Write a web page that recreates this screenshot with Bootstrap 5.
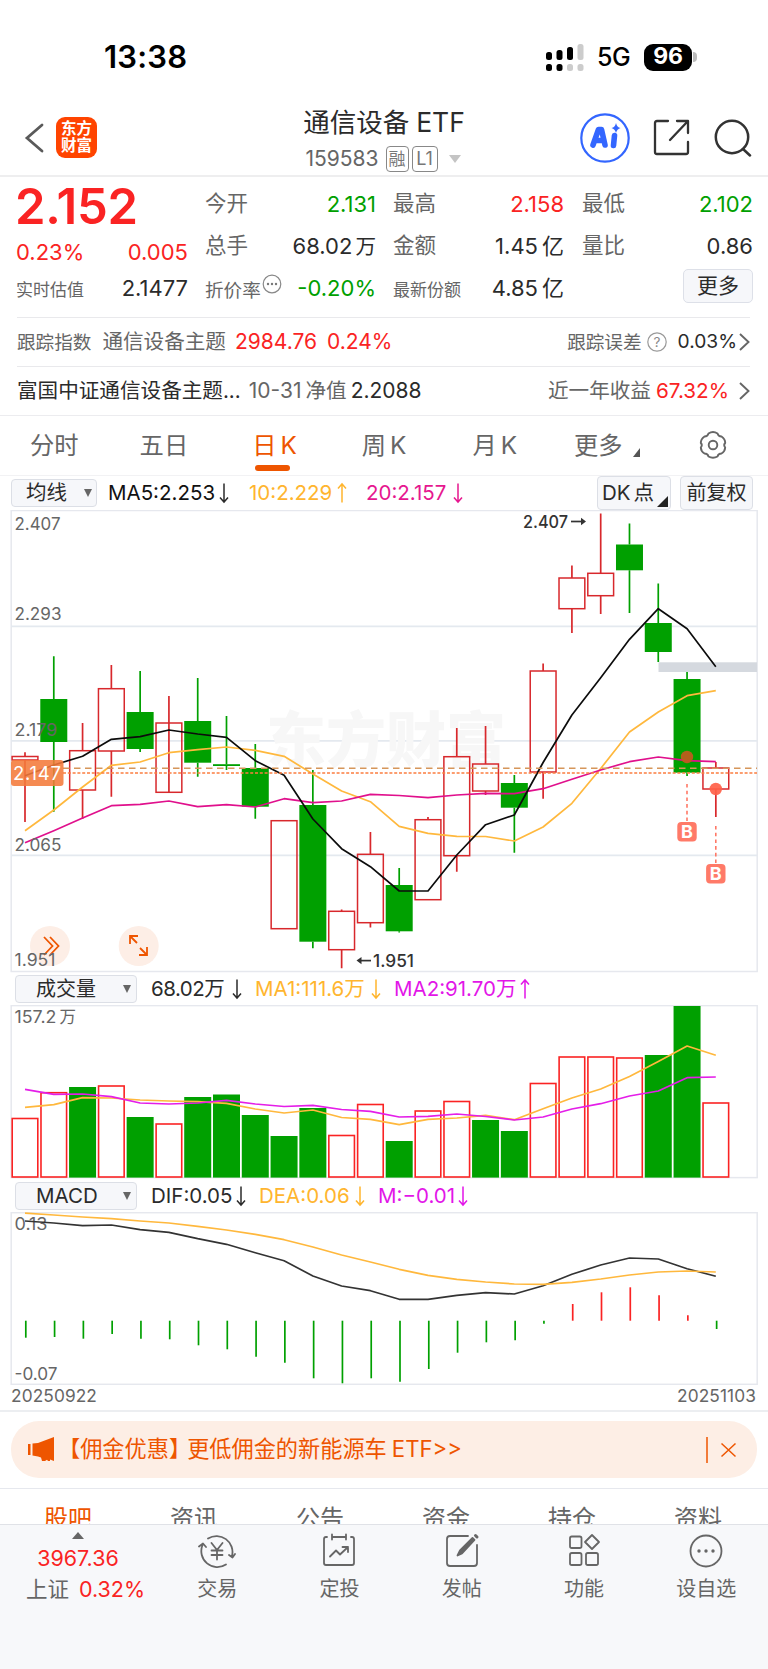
<!DOCTYPE html>
<html lang="zh-CN">
<head>
<meta charset="utf-8">
<meta name="viewport" content="width=device-width, initial-scale=1">
<title>通信设备ETF 159583</title>
<link href="https://cdn.jsdelivr.net/npm/bootstrap@5.3.0/dist/css/bootstrap.min.css" rel="stylesheet">
<style>
:root{--ink:#2b2b2b;--dim:#666;--up:#fa2323;--down:#00a000;--brand:#ee5500;--line:#ececef;--btn:#f6f7fa}
body{font-family:Inter,"Noto Sans CJK SC",sans-serif;color:var(--ink);background:#fff;font-size:21px;line-height:1.2;width:768px;height:1669px;overflow:hidden}
svg{display:block;flex:none}
.up{color:var(--up)}.down{color:var(--down)}.dim{color:var(--dim)}.brand{color:var(--brand)}
.t17{font-size:17px}.t18{font-size:18.6px}.t20{font-size:20.6px}
.gap-l{margin-left:4px}
.statusbar{height:94px;padding:20px 71px 0 104px}
.clock{font-size:31px;font-weight:600;letter-spacing:.2px;color:#000}
.net{font-size:25px;font-weight:500;color:#000;margin-left:13px;letter-spacing:-.6px}
.batt{width:48px;height:27px;border-radius:9px;background:#000;color:#fff;font-weight:700;font-size:23px;margin-left:14px;letter-spacing:-.3px}
.nub{width:4px;height:10px;border-radius:0 5px 5px 0;background:#bbb;margin-left:1px}
.topbar{height:83px;border-bottom:2px solid #eeeeef;padding-top:6px}
.side{width:280px}
.logo{width:41px;height:41px;border-radius:9px;background:#ff4400;color:#fff;font-weight:700;font-size:15.5px;line-height:17px;margin-left:12px;padding-top:3px;text-align:center}
.name{font-size:26.5px;line-height:36px}
.code{font-size:21px;line-height:26px;margin-top:6px;color:var(--dim);margin-left:-2px}
.tag{border:1.5px solid #888;border-radius:4px;height:26px;font-size:17px;color:#777;line-height:24px;text-align:center;flex:none}
.quote{height:140px;padding-left:16px}
.lastpx{font-size:49px;font-weight:600;height:60px;line-height:60px;letter-spacing:-.2px;color:var(--up);margin-left:-1px}
.qr{height:42px;font-size:21.5px}
.qr .num,.sub{font-size:22px}
.c0{width:172px;margin-right:17px}.c1{width:171px;margin-right:17px}.c2{width:171px;margin-right:18px}.c3{width:171px}
.more{width:70px;height:34px;border:1.5px solid #dde0e8;border-radius:5px;background:var(--btn);font-size:21px}
.info{height:49px;margin:0 18px 0 17px;border-top:1px solid #e9e9ec}
.tabs{height:61px;border-top:1px solid var(--line);border-bottom:1px solid #f2f2f4;font-size:24.3px;color:var(--dim)}
.tabs .cur{position:relative}
.tabs .cur::after{content:"";position:absolute;left:3px;width:35px;bottom:-11px;height:6px;border-radius:3px;background:var(--brand)}
.bar{font-size:20.5px;white-space:nowrap}
.bar>*{flex:none}
.pick{border:1.5px solid #dcdfe6;border-radius:4px;background:var(--btn);height:28px}
.tri{width:0;height:0;border:4px solid transparent;border-top:8px solid #666;border-bottom:0}
.y{color:#ffb52e}.m{color:#e6178f}.p{color:#e216e8}
.dates{height:25px;padding:0 12px 3px 11px;font-size:17.3px;color:#666;letter-spacing:.1px}
.promo{height:57px;margin:9px 11px 10px;border-radius:28px;background:#fdeee5;color:var(--brand);font-size:22.2px}
.subtabs{height:36px;border-top:1.5px solid #e6e8ee;font-size:24px;line-height:30px;color:var(--dim);overflow:hidden;padding-top:15px}
.subtabs span{width:126px;text-align:center;flex:none}
.dock{height:145px;background:#f7f8fa;border-top:1.5px solid #e0e2e7;color:var(--dim);font-size:20px}
.dock .it{width:122.3px}
.dock .idx{width:156px;font-size:21.5px}
.it svg{margin-top:8px;height:36px}
.it div{line-height:30px;margin-top:5px}
</style>
</head>
<body>
<div class="statusbar d-flex align-items-center">
  <span class="clock me-auto">13:38</span>
  <svg width="38" height="27"><g fill="#000"><rect y="8" width="6" height="8" rx="2.5"/><rect x="10.5" y="6" width="6" height="10" rx="2.5"/><rect x="21" y="3" width="6" height="13" rx="2.5"/><rect y="20" width="6" height="7" rx="2.5"/><rect x="10.5" y="20" width="6" height="7" rx="2.5"/></g><g fill="#ccc"><rect x="31.5" width="6" height="16" rx="2.5"/><rect x="21" y="20" width="6" height="7" rx="2.5"/><rect x="31.5" y="20" width="6" height="7" rx="2.5"/></g></svg>
  <span class="net">5G</span>
  <span class="batt d-flex align-items-center justify-content-center">96</span><span class="nub"></span>
</div>

<header class="topbar d-flex align-items-center">
  <div class="side d-flex align-items-center ps-4">
    <svg width="20" height="32" fill="none" stroke="#5a5a5a" stroke-width="2.8" stroke-linecap="round"><path d="M18 3 3 16l15 13"/></svg>
    <div class="logo">东方<br>财富</div>
  </div>
  <div class="text-center" style="width:208px">
    <div class="name">通信设备<span style="margin-left:7px">ETF</span></div>
    <div class="code d-flex align-items-center justify-content-center"><span>159583</span><span class="tag" style="width:23px;margin-left:7px">融</span><span class="tag" style="width:26px;margin-left:3px;font-size:18px">L1</span><svg style="margin-left:11px" width="12" height="8"><path d="M0 0h12L6 8z" fill="#c4c4c4"/></svg></div>
  </div>
  <div class="side d-flex align-items-center justify-content-end" style="padding-right:16px">
    <svg width="50" height="50"><circle cx="25" cy="25" r="23.7" fill="none" stroke="#3366ff" stroke-width="2.2"/><g stroke="#3366ff" stroke-width="5.6" fill="none" stroke-linecap="round" stroke-linejoin="round"><path d="M13 32 18.5 16.500h3L25 32M16 27.500h8M34.500 22.500 33.500 32.500"/></g><path d="M36 10q1 4.500 4.500 5-3.500 1-4.500 5-1-4-4.500-5 3.500-.5 4.500-5z" fill="#3366ff"/></svg>
    <svg style="margin-left:23px" width="37" height="37" fill="none" stroke="#333" stroke-width="2.300" stroke-linecap="round" stroke-linejoin="round"><path d="M15 2H4Q2 2 2 4v29q0 2 2 2h29q2 0 2-2V23M24 2h11v12M35 2 17 21"/></svg>
    <svg style="margin-left:24px" width="38" height="38" fill="none" stroke="#333" stroke-width="2.500" stroke-linecap="round"><circle cx="18" cy="18" r="16.200"/><path d="m29 30 7 6.500"/></svg>
  </div>
</header>

<section class="quote d-flex">
  <div class="c0">
    <div class="lastpx">2.152</div>
    <div class="sub up d-flex justify-content-between align-items-center" style="height:30px"><span>0.23%</span><span>0.005</span></div>
    <div class="qr d-flex justify-content-between align-items-center"><span class="t17 dim pt-1">实时估值</span><span class="num">2.1477</span></div>
  </div>
  <div class="c1" style="padding-top:6px">
    <div class="qr d-flex justify-content-between align-items-center"><span class="dim">今开</span><span class="num down">2.131</span></div>
    <div class="qr d-flex justify-content-between align-items-center"><span class="dim">总手</span><span class="num">68.02<span class="t20" style="margin-left:3px">万</span></span></div>
    <div class="qr d-flex align-items-center"><span class="t18 dim pt-1">折价率</span><svg style="margin:-9px 0 0 1px" width="20" height="20"><circle cx="10" cy="10" r="8.800" fill="none" stroke="#888" stroke-width="1.200"/><g fill="#777"><circle cx="6" cy="10" r="1.200"/><circle cx="10" cy="10" r="1.200"/><circle cx="14" cy="10" r="1.200"/></g></svg><span class="num down ms-auto">-0.20%</span></div>
  </div>
  <div class="c2" style="padding-top:6px">
    <div class="qr d-flex justify-content-between align-items-center"><span class="dim">最高</span><span class="num up">2.158</span></div>
    <div class="qr d-flex justify-content-between align-items-center"><span class="dim">金额</span><span class="num">1.45<span class="gap-l">亿</span></span></div>
    <div class="qr d-flex justify-content-between align-items-center"><span class="t17 dim pt-1">最新份额</span><span class="num">4.85<span class="gap-l">亿</span></span></div>
  </div>
  <div class="c3" style="padding-top:6px">
    <div class="qr d-flex justify-content-between align-items-center"><span class="dim">最低</span><span class="num down">2.102</span></div>
    <div class="qr d-flex justify-content-between align-items-center"><span class="dim">量比</span><span class="num">0.86</span></div>
    <div class="qr d-flex justify-content-end align-items-center" style="margin-top:-2px"><span class="more d-flex align-items-center justify-content-center">更多</span></div>
  </div>
</section>

<div class="info d-flex align-items-center">
  <span class="t18 dim">跟踪指数</span><span class="t20 dim" style="margin-left:11px">通信设备主题</span>
  <span class="up" style="margin-left:9px">2984.76</span><span class="up" style="margin-left:10px">0.24%</span>
  <span class="t18 dim ms-auto">跟踪误差</span>
  <svg style="margin:0 11px 0 5px" width="20" height="20"><circle cx="10" cy="10" r="9.200" fill="none" stroke="#999" stroke-width="1.200"/><text x="10" y="15" font-size="13.500" text-anchor="middle" fill="#888">?</text></svg>
  <span style="font-size:19.200px">0.03%</span>
  <svg style="margin-left:2px" width="11" height="18" fill="none" stroke="#666" stroke-width="1.900"><path d="m1 1 8.500 8L1 17"/></svg>
</div>
<div class="info d-flex align-items-center">
  <span class="t20">富国中证通信设备主题...</span><span class="dim" style="margin-left:8px">10-31<span class="gap-l t20">净值</span></span>
  <span style="margin-left:4px">2.2088</span>
  <span class="t20 dim ms-auto">近一年收益</span><span class="up" style="margin-left:5px;font-size:20.700px">67.32%</span>
  <svg style="margin-left:10px" width="11" height="18" fill="none" stroke="#666" stroke-width="1.900"><path d="m1 1 8.500 8L1 17"/></svg>
</div>

<nav class="tabs d-flex align-items-center">
  <span style="margin-left:30px">分时</span><span style="margin-left:61px">五日</span>
  <span class="cur brand" style="margin-left:64px">日<span class="gap-l">K</span></span>
  <span style="margin-left:65px">周<span class="gap-l">K</span></span>
  <span style="margin-left:66px">月<span class="gap-l">K</span></span>
  <span style="margin-left:57px">更多</span>
  <svg style="margin:14px 0 0 10px" width="7" height="9"><path d="M7 0v9H0z" fill="#555"/></svg>
  <svg style="margin:-2px 0 0 58px" width="30" height="30" fill="none" stroke="#666" stroke-width="1.900" stroke-linejoin="round"><path d="M10.500 3.500Q15 .5 19.500 3.500q.8 3 4 3 3.800 2.500 3.700 6.500-2 2 0 4.500-.3 4-3.700 6-3.200 0-4 3-4.500 2.600-9 0-.8-3-4-3-3.500-2-3.700-6 2-2.500 0-4.500 0-4 3.700-6.500 3.200 0 4-3z"/><circle cx="15" cy="15" r="4.300"/></svg>
</nav>

<div class="bar d-flex align-items-center" style="height:34px;padding-left:11px">
  <span class="pick d-flex align-items-center" style="width:86px;padding-left:14px">均线<i class="tri" style="margin-left:17px"></i></span>
  <span style="margin-left:11px;width:108px;color:#111">MA5:2.253</span><svg class="ar" width="16" height="22"></svg>
  <span class="y" style="margin-left:17px;width:85px">10:2.229</span><svg class="ar y" data-up="1" width="16" height="22"></svg>
  <span class="m" style="margin-left:16px;width:84px">20:2.157</span><svg class="ar m" width="16" height="22"></svg>
  <span class="pick d-flex align-items-center" style="width:74px;height:34px;margin-left:131px;padding-left:4px">DK<span style="margin-left:3px">点</span><svg style="margin:16px 0 0 3px" width="11" height="11"><path d="M11 0v11H0z" fill="#222"/></svg></span>
  <span class="pick d-flex align-items-center justify-content-center" style="width:73px;height:34px;margin-left:9px;font-size:20px">前复权</span>
</div>

<svg id="kline" width="768" height="463" viewBox="0 510 768 463"></svg>

<div class="bar d-flex align-items-center" style="height:32px;padding-left:15px">
  <span class="pick d-flex align-items-center" style="width:122px;padding-left:20px;font-size:20px">成交量<i class="tri" style="margin-left:27px"></i></span>
  <span style="margin-left:14px;width:78px;letter-spacing:-.5px">68.02万</span><svg class="ar" width="16" height="22"></svg>
  <span class="y" style="margin-left:10px;width:113px">MA1:111.6万</span><svg class="ar y" width="16" height="22"></svg>
  <span class="p" style="margin-left:10px;width:123px">MA2:91.70万</span><svg class="ar p" data-up="1" width="16" height="22"></svg>
</div>

<svg id="vol" width="768" height="175" viewBox="0 1005 768 175"></svg>

<div class="bar d-flex align-items-center" style="height:32px;padding-left:15px">
  <span class="pick d-flex align-items-center" style="width:122px;padding-left:20px">MACD<i class="tri" style="margin-left:25px"></i></span>
  <span style="margin-left:14px;width:82px">DIF:0.05</span><svg class="ar" width="16" height="22"></svg>
  <span class="y" style="margin-left:10px;width:93px">DEA:0.06</span><svg class="ar y" width="16" height="22"></svg>
  <span class="p" style="margin-left:10px;width:77px">M:−0.01</span><svg class="ar p" width="16" height="22"></svg>
</div>

<svg id="macd" width="768" height="173" viewBox="0 1212 768 173"></svg>
<div class="dates d-flex justify-content-between align-items-center"><span>20250922</span><span>20251103</span></div>

<div class="d-flow-root" style="border-top:2px solid #eceef1">
<div class="promo d-flex align-items-center">
  <svg style="margin-left:17px" width="27" height="25" fill="#ee5500"><path d="M0 7h2.500v11H0zM4.500 6.500 10 6 26 0v24l-4-1.600v1.600h-2l-1-1.200-2 1.200h-3l-1-3.500-3-1-5.500-1z"/></svg>
  <span style="margin-left:3px">【佣金优惠】</span><span style="margin-left:-4px">更低佣金的新能源车</span><span style="margin-left:5px">ETF&gt;&gt;</span>
  <svg class="ms-auto" style="margin-right:20px" width="31" height="26" fill="none" stroke="#ee5500" stroke-width="1.500"><path d="M1 0v26M15.500 6.500l14 13M29.500 6.500l-14 13"/></svg>
</div>
</div>
<div class="subtabs d-flex" style="padding-left:5px"><span class="brand">股吧</span><span>资讯</span><span>公告</span><span>资金</span><span>持仓</span><span>资料</span></div>

<footer class="dock d-flex text-center">
  <div class="idx">
    <svg class="mx-auto" style="margin-top:7px" width="12" height="7"><path d="M0 7h12L6 0z" fill="#666"/></svg>
    <div class="up" style="line-height:30px;margin-top:4px">3967.36</div>
    <div style="line-height:30px;margin-top:1px;padding-left:15px">上证 <span class="up" style="margin-left:4px">0.32%</span></div>
  </div>
  <div class="it"><svg class="mx-auto" width="38" height="36" fill="none" stroke="#666" stroke-width="1.800" stroke-linecap="round" stroke-linejoin="round"><path d="M10 5.500A16 16 0 0 1 34 23M28 31.500A16 16 0 0 1 4.500 12M1 13.500l4-3 3 3.500M31 22l3.500 2.500 2.500-3.500M13.500 10l5.500 7 5.500-7M19 17v9.500M13.500 17.500h11M13.500 22h11"/></svg><div>交易</div></div>
  <div class="it"><svg class="mx-auto" width="36" height="36" fill="none" stroke="#666" stroke-width="1.800" stroke-linecap="round" stroke-linejoin="round"><path d="M6 4H5Q3 4 3 6v24q0 2 2 2h26q2 0 2-2V6q0-2-2-2h-1M11 4h14M11 1.500v5M25 1.500v5M9 23.500l6-6 4 4 8-7.500M21.500 14H27v5"/></svg><div>定投</div></div>
  <div class="it"><svg class="mx-auto" width="36" height="36" fill="none" stroke="#666" stroke-width="1.800" stroke-linecap="round" stroke-linejoin="round"><path d="M24 3H6Q3 3 3 6v24q0 3 3 3h24q3 0 3-3V12"/><path d="m13.500 22.500 2.500-5L28.500 5l2 2L18 20.500z" fill="#666"/><path d="m31.500 2.500 1.500 1.500" stroke-width="3"/></svg><div>发帖</div></div>
  <div class="it"><svg class="mx-auto" width="36" height="36" fill="none" stroke="#666" stroke-width="1.800" stroke-linejoin="round"><rect x="4" y="3.500" width="11.500" height="11.500" rx="1.800"/><rect x="4" y="20" width="11.500" height="12" rx="1.800"/><rect x="20" y="20" width="12" height="12" rx="1.800"/><path d="m26 2 7 7-7 7-7-7z"/></svg><div>功能</div></div>
  <div class="it"><svg class="mx-auto" width="36" height="36"><circle cx="18" cy="18" r="15.500" fill="none" stroke="#666" stroke-width="1.800"/><g fill="#666"><circle cx="11" cy="18" r="1.700"/><circle cx="18" cy="18" r="1.700"/><circle cx="25" cy="18" r="1.700"/></g></svg><div>设自选</div></div>
</footer>

<script src="https://cdn.jsdelivr.net/npm/bootstrap@5.3.0/dist/js/bootstrap.bundle.min.js"></script>
<script>
const X = i => 25 + 28.785 * i;
const G = '#00a000', R = '#d8282c';
const line = (v, c, w = 1.7) => `<polyline fill="none" stroke="${c}" stroke-width="${w}" stroke-linejoin="round" points="${v.map((y, i) => X(i).toFixed(1) + ',' + y).join(' ')}"/>`;
const label = (x, y, t, w, extra = '') => `<text x="${x}" y="${y}" font-size="17" fill="#666" textLength="${w}" lengthAdjust="spacingAndGlyphs" ${extra}>${t}</text>`;
const frame = (y, h) => `<rect x="11.200" y="${y}" width="746" height="${h}" fill="none" stroke="#e6e8ee" stroke-width="1.500"/>`;

// up flag, body top, body bottom, high, low
const candles = [
 [1,756.5,760,752.3,822],[0,699,742,656.3,811.7],[1,750.7,790,723,819],[1,688.7,751,665,796.7],[0,712,749,671,752],
 [1,723,792.3,696,723],[0,721,762.7,678,776.7],[0,764.2,766,716,770],[0,768,806.7,744,818.7],[1,820.7,928.7,820.7,928.7],
 [0,805,941.7,770,948.3],[1,911.3,949.7,909.5,968.3],[1,854.3,922.7,832,927.5],[0,885,931.3,868,932.5],[1,819.7,899.7,817,899],
 [1,756.7,855.7,728,871.7],[1,764,791,726,795],[0,783,807.7,775,852.7],[1,671,772,663.5,798.7],[1,578,608.7,565.5,633],
 [1,573.3,595.7,513.5,614],[0,544.5,570.3,523.5,613],[0,623,652,583.5,662],[0,679,772.7,672,776],[1,768,789,762,817]];
let k = frame(510.5, 461);
[626.3, 740.8, 855.3].forEach(y => k += `<path d="M11 ${y}H757" stroke="#e4e9ef" stroke-width="1.700"/>`);
k += `<text x="266" y="762" font-size="60" font-weight="900" fill="#f7f7f7" textLength="240">东方财富</text>`;
k += `<rect x="658.500" y="662.300" width="98.500" height="9.700" fill="#d5d9df"/>`;
candles.forEach(([u, t, b, h, l], i) => {
  const x = X(i), c = u ? R : G;
  k += `<path d="M${x} ${h}V${t}M${x} ${b}V${l}" stroke="${c}" stroke-width="1.700"/>`;
  k += u ? `<rect x="${x - 12.9}" y="${t}" width="25.800" height="${b - t}" fill="none" stroke="${c}" stroke-width="1.500"/>`
         : `<rect x="${x - 13.5}" y="${t}" width="27" height="${b - t}" fill="${c}"/>`;
});
k += line([830.7,810,787,765.3,762,752.7,749.7,747,750.3,756.3,774,791,801.7,826.3,833.3,836.3,836.5,841,827,803.3,768.5,732,712,695.7,690.7], '#ffb83d');
k += line([842.7,830.7,818,805.7,804.3,801,806.7,804.7,807,798.7,802.7,801,794.3,795.5,797.7,795,793.3,793.7,788.7,779.3,770,761.7,757,760.7,761.7], '#e0108c');
k += line([775.7,765,756.3,739.3,736.7,730,734,737.3,760.7,775.3,819,848.7,866.7,891,891,855,824.7,815,762.5,715,677.7,639.3,608.7,628.7,666.7], '#0c0c0c');
k += `<path d="M63 768.200H757" stroke="#d6965a" stroke-width="1.600" stroke-dasharray="6.500 4.500"/><path d="M63 773H757" stroke="#fb7e40" stroke-width="1.700" stroke-dasharray="3 1.800"/>`;
k += `<circle cx="50" cy="946" r="20" fill="#fdeee6"/><circle cx="138.700" cy="946" r="20" fill="#fdeee6"/>
<path d="M44 937l8.500 9-8.500 9M50 937l8.500 9-8.500 9" fill="none" stroke="#ee5500" stroke-width="1.800"/>
<path d="M130 944v-8h8M130 936l7 7M147 947v8h-8M147 955l-7-7" fill="none" stroke="#ee5500" stroke-width="1.800"/>`;
k += label(14.5, 530, '2.407', 46) + label(14.5, 620.3, '2.293', 47) + label(14.5, 735.5, '2.179', 43) + label(14.5, 851, '2.065', 47) + label(14.5, 966, '1.951', 41);
k += `<rect x="11" y="760" width="52.500" height="26" rx="3" fill="#f47a3a" fill-opacity=".88"/><text x="13" y="779.500" font-size="18.500" fill="#fff" textLength="48">2.147</text>`;
k += `<text x="523" y="528" font-size="17" font-weight="500" fill="#333" textLength="45" lengthAdjust="spacingAndGlyphs">2.407</text><path d="M571 521.500h12" stroke="#333" stroke-width="1.700"/><path d="M586 521.500l-5-3.700v7.400z" fill="#333"/>`;
k += `<text x="373" y="967.300" font-size="17" font-weight="500" fill="#333" textLength="41" lengthAdjust="spacingAndGlyphs">1.951</text><path d="M360 960.600h11" stroke="#333" stroke-width="1.700"/><path d="M356.500 960.600l5-3.700v7.400z" fill="#333"/>`;
[[687, 757, 784, '#c25a1e'], [715.8, 789, 826, '#ff6048']].forEach(([x, y, s, c]) => {
  k += `<circle cx="${x}" cy="${y}" r="6.200" fill="${c}" fill-opacity=".92"/><path d="M${x} ${s}v38" stroke="#ff7866" stroke-width="1.600" stroke-dasharray="3.600 3.100"/>
  <rect x="${x - 9.7}" y="${s + 38}" width="19.400" height="19.500" rx="4" fill="#ff7a68"/><text x="${x}" y="${s + 54.2}" font-size="18" font-weight="700" fill="#fff" text-anchor="middle">B</text>`;
});
kline.innerHTML = k;

const tops = [1118.5,1092.7,1087,1086,1117,1124,1097,1094.5,1115,1136,1108,1135.5,1104.5,1141,1111,1101.5,1120,1131,1083.5,1057,1057,1058,1055,1006,1103];
const volUp = '1101010000011011001111001';
let v = frame(1005.6, 172);
tops.forEach((t, i) => {
  v += volUp[i] === '1' ? `<rect x="${X(i) - 12.8}" y="${t}" width="25.600" height="${1177 - t}" fill="none" stroke="#fa2323" stroke-width="1.600"/>`
    : `<rect x="${X(i) - 13.5}" y="${t}" width="27" height="${1177.6 - t}" fill="${G}"/>`;
});
v += line([1107.3,1104.7,1097.7,1098,1100,1101,1101.7,1103.3,1109,1113,1110,1117.5,1119.3,1124.7,1119.3,1118,1115.3,1119.7,1108.7,1098,1089,1076.5,1061.5,1046,1055.3], '#ffb83d');
v += line([1089.3,1094.3,1094,1096.7,1103,1104,1103,1100.3,1104,1106.5,1105.3,1109.5,1111.3,1117,1116.3,1114,1116.5,1120,1117,1109,1103.7,1096,1091,1077.7,1077], '#e41ee8');
v += label(14.5, 1023.3, '157.2', 42) + `<text x="59.500" y="1023.300" font-size="16.500" fill="#666">万</text>`;
vol.innerHTML = v;

const hist = [1337.7,1337,1338.7,1334,1338.7,1339.3,1345.3,1349.3,1356.7,1362.7,1378.3,1383.3,1378.3,1381.7,1369,1352.7,1342.3,1340.3,1323.7,1304,1292.3,1287.3,1295.3,1315.3,1329];
let m = frame(1212.7, 171.6) + label(14.5, 1230, '0.13', 33) + label(14.5, 1380, '-0.07', 43);
hist.forEach((y, i) => m += `<path d="M${X(i) + .8} 1320.700V${y}" stroke="${y < 1320 ? '#fa2323' : G}" stroke-width="1.700"/>`);
m += line([1221,1223,1225.7,1225,1229.7,1232.3,1238.7,1244.3,1252.7,1260.7,1276,1286,1290.7,1299.3,1299.3,1295.3,1292.7,1294,1285.7,1274.3,1265,1258,1259,1268.7,1276.3], '#333');
m += line([1213.2,1215,1217,1218.7,1221,1223,1226.3,1230,1234.3,1239.7,1247,1255,1262,1269.3,1275.3,1279.3,1282,1284,1284.3,1282.3,1279,1275,1272,1271,1272], '#ffb83d');
macd.innerHTML = m;

document.querySelectorAll('svg.ar').forEach(s => {
  s.innerHTML = `<path d="${s.dataset.up ? 'M8 20.500V2M4 6.500L8 2l4 4.500' : 'M8 1.500V20M4 15.500L8 20l4-4.500'}" fill="none" stroke="currentColor" stroke-width="1.500"/>`;
});
</script>
</body>
</html>
